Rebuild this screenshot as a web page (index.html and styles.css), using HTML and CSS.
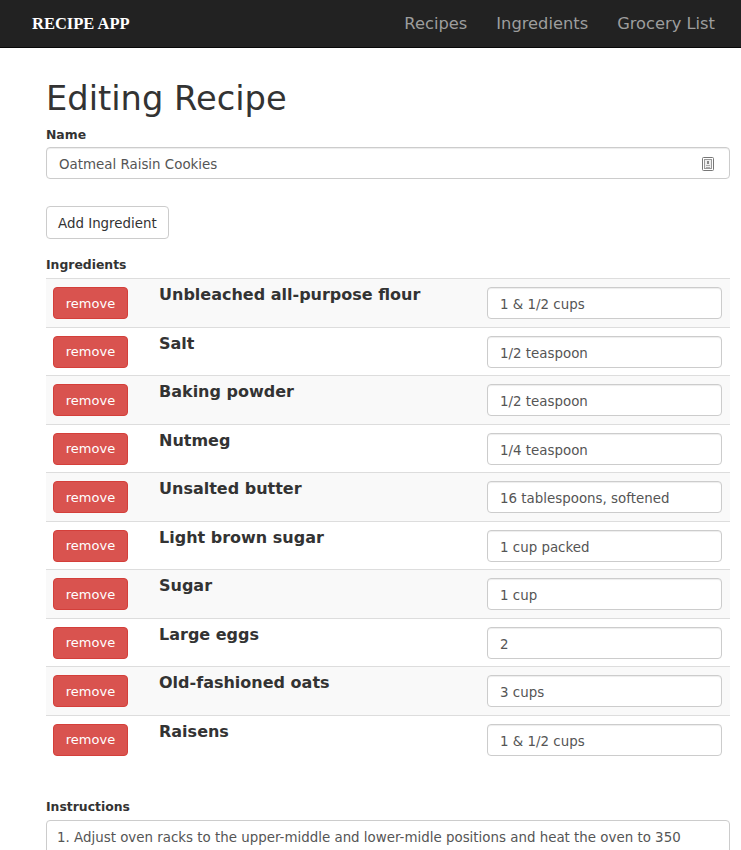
FILE: index.html
```html
<!DOCTYPE html>
<html>
<head>
<meta charset="utf-8">
<link rel="stylesheet" href="styles.css">
</head>
<body>
<nav class="navbar">
  <a class="brand">RECIPE APP</a>
  <ul class="nav">
    <li>Recipes</li>
    <li>Ingredients</li>
    <li>Grocery List</li>
  </ul>
</nav>
<main class="container">
  <h1 class="title">Editing Recipe</h1>
  <div class="group">
    <label class="label">Name</label>
    <div class="input name-input">
      <span>Oatmeal Raisin Cookies</span>
      <svg class="autofill" width="12" height="14" viewBox="0 0 12 14"><rect x="0.5" y="0.5" width="11" height="13" rx="1" fill="#fff" stroke="#777"/><rect x="2.5" y="2.5" width="7" height="9" fill="#eee" stroke="#999"/><rect x="5" y="4" width="2" height="3" fill="#888"/><rect x="4" y="8" width="4" height="1" fill="#aaa"/><rect x="4" y="10" width="4" height="1" fill="#aaa"/></svg>
    </div>
  </div>
  <button class="btn-default">Add Ingredient</button>
  <label class="label ing-label">Ingredients</label>
  <div class="table">
    <div class="row"><div class="c1"><span class="btn-danger">remove</span></div><div class="c2">Unbleached all-purpose flour</div><div class="c3"><div class="input">1 &amp; 1/2 cups</div></div></div>
    <div class="row"><div class="c1"><span class="btn-danger">remove</span></div><div class="c2">Salt</div><div class="c3"><div class="input">1/2 teaspoon</div></div></div>
    <div class="row"><div class="c1"><span class="btn-danger">remove</span></div><div class="c2">Baking powder</div><div class="c3"><div class="input">1/2 teaspoon</div></div></div>
    <div class="row"><div class="c1"><span class="btn-danger">remove</span></div><div class="c2">Nutmeg</div><div class="c3"><div class="input">1/4 teaspoon</div></div></div>
    <div class="row"><div class="c1"><span class="btn-danger">remove</span></div><div class="c2">Unsalted butter</div><div class="c3"><div class="input">16 tablespoons, softened</div></div></div>
    <div class="row"><div class="c1"><span class="btn-danger">remove</span></div><div class="c2">Light brown sugar</div><div class="c3"><div class="input">1 cup packed</div></div></div>
    <div class="row"><div class="c1"><span class="btn-danger">remove</span></div><div class="c2">Sugar</div><div class="c3"><div class="input">1 cup</div></div></div>
    <div class="row"><div class="c1"><span class="btn-danger">remove</span></div><div class="c2">Large eggs</div><div class="c3"><div class="input">2</div></div></div>
    <div class="row"><div class="c1"><span class="btn-danger">remove</span></div><div class="c2">Old-fashioned oats</div><div class="c3"><div class="input">3 cups</div></div></div>
    <div class="row"><div class="c1"><span class="btn-danger">remove</span></div><div class="c2">Raisens</div><div class="c3"><div class="input">1 &amp; 1/2 cups</div></div></div>
  </div>
  <label class="label instr-label">Instructions</label>
  <div class="textarea">1. Adjust oven racks to the upper-middle and lower-midle positions and heat the oven to 350</div>
</main>
</body>
</html>
```
FILE: styles.css
```css
* { box-sizing: border-box; }
body {
  margin: 0;
  font-family: "DejaVu Sans", Verdana, sans-serif;
  font-size: 13.4px;
  color: #333;
  background: #fff;
}
.navbar {
  height: 48px;
  background: #222;
  border-bottom: 1px solid #080808;
  display: flex;
  align-items: center;
  justify-content: space-between;
  padding: 0 26px 0 32px;
}
.brand {
  color: #fff;
  font-family: "Liberation Serif", serif;
  font-weight: bold;
  font-size: 16.5px;
}
.nav {
  list-style: none;
  margin: 0;
  padding: 0;
  display: flex;
  gap: 29px;
}
.nav li {
  color: #9d9d9d;
  font-size: 16.3px;
}
.container {
  padding: 0 11px 0 46px;
}
.title {
  font-size: 33.7px;
  font-weight: normal;
  margin: 32px 0 10px;
  line-height: 1.1;
}
.label {
  display: block;
  font-weight: bold;
  font-size: 12.4px;
  margin-bottom: 5px;
}
.input {
  height: 32px;
  border: 1px solid #ccc;
  border-radius: 4px;
  padding: 2px 12px 0;
  display: flex;
  align-items: center;
  color: #555;
  background: #fff;
  box-shadow: inset 0 1px 1px rgba(0,0,0,.075);
  font-size: 13.4px;
}
.name-input { justify-content: space-between; padding: 3px 15px 0 12px; }
.name-input .autofill { margin-top: -2px; }
.autofill { display: block; }
.btn-default {
  display: block;
  margin-top: 27px;
  height: 33px;
  padding: 2px 11px 0;
  border: 1px solid #ccc;
  border-radius: 4px;
  background: #fff;
  color: #333;
  font-family: inherit;
  font-size: 13.4px;
}
.ing-label { margin-top: 18px; margin-bottom: 6px; }
.table { margin-bottom: 36px; }
.row {
  display: flex;
  border-top: 1px solid #ddd;
  height: 48.5px;
}
.row:nth-child(odd) { background: #f9f9f9; }
.c1 { padding: 8px 7px; width: 105px; }
.c2 {
  flex: 1;
  padding: 7px 8px;
  font-weight: bold;
  font-size: 16px;
  line-height: 18px;
}
.c3 { width: 251px; padding: 8px 8px 0 8px; }
.c3 .input { padding-top: 3px; }
.btn-danger {
  display: flex;
  align-items: center;
  justify-content: center;
  width: 75px;
  height: 32px;
  background: #d9534f;
  border: 1px solid #d43f3a;
  border-radius: 4px;
  color: #fff;
  font-size: 13px;
}
.instr-label { margin-bottom: 6px; }
.textarea {
  height: 60px;
  border: 1px solid #ccc;
  border-radius: 4px;
  padding: 8px 10px;
  color: #555;
  line-height: 17px;
}
```
